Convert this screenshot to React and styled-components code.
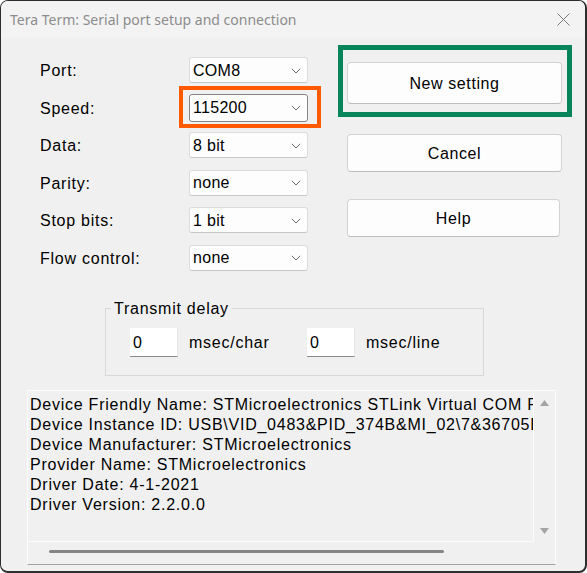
import React from 'react'
import styled, { createGlobalStyle } from 'styled-components'

const GlobalStyle = createGlobalStyle`
html, body {
  margin: 0;
  padding: 0;
  background: #ffffff;
}
`

const Window = styled.div`
width: 587px;
height: 573px;
box-sizing: border-box;
border: 1px solid #2e2e2e;
border-right-width: 2px;
border-bottom-width: 2px;
border-radius: 8px;
background: #f0f0f0;
overflow: hidden;
display: flex;
flex-direction: column;
font-family: "Liberation Sans", Arial, sans-serif;
font-size: 16px;
letter-spacing: 0.75px;
color: #000;
`

const TitleBar = styled.div`
height: 37px;
flex: none;
display: flex;
align-items: center;
justify-content: space-between;
padding-left: 9px;
background: #f3f3f3;
font-family: "Noto Sans", sans-serif;
font-size: 14px;
letter-spacing: 0;
color: #8c8c8c;
`

const CloseButton = styled.div`
width: 44px;
height: 37px;
display: flex;
align-items: center;
justify-content: center;
`

const Body = styled.div`
flex: 1;
display: flex;
flex-direction: column;
padding: 19px 31px 0 26px;
`

const TopRow = styled.div`
display: flex;
gap: 39px;
padding-left: 13px;
`

const FormGrid = styled.div`
display: grid;
grid-template-columns: 149px 119px;
grid-auto-rows: 26px;
row-gap: 11.5px;
align-items: center;
`

const Label = styled.div`
line-height: 20px;
padding-top: 2px;
`

const Combo = styled.div`
box-sizing: border-box;
height: ${p => p.focused ? '28px' : '26px'};
margin: ${p => p.focused ? '-1px 0' : '0'};
display: flex;
align-items: center;
justify-content: space-between;
padding: 1px 6px 0 3px;
background: #fdfdfd;
border: 1px solid ${p => p.focused ? '#858585' : '#dcdcdc'};
border-bottom-color: ${p => p.focused ? '#858585' : '#c8c8c8'};
border-radius: 3px;
letter-spacing: 0.3px;
`

const Marked = styled.div`
position: relative;
&::after {
  content: "";
  position: absolute;
  top: ${p => p.t}px;
  left: ${p => p.l}px;
  right: ${p => p.r}px;
  bottom: ${p => p.b}px;
  border: ${p => p.w}px solid ${p => p.color};
  pointer-events: none;
}
`

const ButtonCol = styled.div`
display: flex;
flex-direction: column;
padding-top: 5px;
`

const Button = styled.button`
box-sizing: border-box;
width: ${p => p.w || 215}px;
height: ${p => p.h || 38}px;
margin-top: ${p => p.mt || 0}px;
background: #fdfdfd;
border: 1px solid #d3d3d3;
border-bottom-color: #bdbdbd;
border-radius: 4px;
font-family: inherit;
font-size: 16px;
letter-spacing: 0.6px;
color: #000;
padding: 1px 0 0;
`

const GroupBox = styled.fieldset`
box-sizing: border-box;
width: 379px;
margin: 28px 0 0 78px;
padding: 9px 0 18px 0;
border: 1px solid #d8d8d8;
min-width: 0;
`

const Legend = styled.legend`
padding: 0 3px;
margin-left: 5px;
line-height: 20px;
`

const DelayRow = styled.div`
display: grid;
grid-template-columns: 48px 107px 48px auto;
column-gap: 11px;
align-items: center;
padding-left: 24px;
`

const DelayText = styled.span`
padding-top: 2px;
`

const DelayInput = styled.div`
box-sizing: border-box;
height: 29px;
padding: 5px 0 0 3px;
background: #ffffff;
border-bottom: 1px solid #8a8a8a;
border-right: 1px solid #e6e6e6;
line-height: 20px;
`

const InfoBox = styled.div`
box-sizing: border-box;
width: 529px;
height: 175px;
margin-top: 14px;
display: grid;
grid-template-columns: 1fr 21px;
grid-template-rows: 1fr 22px;
border: 1px solid #fbfbfb;
border-bottom-color: #a3a3a3;
`

const InfoText = styled.div`
overflow: hidden;
white-space: nowrap;
padding: 4px 0 0 2px;
border-right: 1px solid #fbfbfb;
border-bottom: 1px solid #fbfbfb;
line-height: 20px;
`

const VScroll = styled.div`
display: flex;
flex-direction: column;
justify-content: space-between;
align-items: center;
padding: 9px 0 8px;
`

const HScroll = styled.div`
grid-column: 1 / span 2;
padding: 8px 0 0 21px;
`

const Thumb = styled.div`
width: 395px;
height: 3px;
border-radius: 2px;
background: #858585;
`

const Chevron = () => (
  <svg width="10" height="6" viewBox="0 0 10 6">
    <path d="M0.8 0.8 L5 5 L9.2 0.8" fill="none" stroke="#6b6b6b" strokeWidth="1" />
  </svg>
)

const Arrow = ({ up }) => (
  <svg width="9" height="6" viewBox="0 0 9 6">
    <path d={up ? 'M0 6 L4.5 0 L9 6 Z' : 'M0 0 L4.5 6 L9 0 Z'} fill="#a3a3a3" />
  </svg>
)

const fields = [
  { label: 'Port:', value: 'COM8' },
  { label: 'Speed:', value: '115200', focused: true },
  { label: 'Data:', value: '8 bit' },
  { label: 'Parity:', value: 'none' },
  { label: 'Stop bits:', value: '1 bit' },
  { label: 'Flow control:', value: 'none' },
]

const info = [
  'Device Friendly Name: STMicroelectronics STLink Virtual COM Port (COM8)',
  'Device Instance ID: USB\\VID_0483&PID_374B&MI_02\\7&36705E40&0&0002',
  'Device Manufacturer: STMicroelectronics',
  'Provider Name: STMicroelectronics',
  'Driver Date: 4-1-2021',
  'Driver Version: 2.2.0.0',
]

const App = () => {
  return (
    <>
      <GlobalStyle />
      <Window>
        <TitleBar>
          <span>Tera Term: Serial port setup and connection</span>
          <CloseButton>
            <svg width="13" height="13" viewBox="0 0 13 13">
              <path d="M0.5 0.5 L12.5 12.5 M12.5 0.5 L0.5 12.5" stroke="#7a7a7a" strokeWidth="1" />
            </svg>
          </CloseButton>
        </TitleBar>
        <Body>
          <TopRow>
            <FormGrid>
              {fields.map(f => (
                <React.Fragment key={f.label}>
                  <Label>{f.label}</Label>
                  {f.focused ? (
                    <Marked t={-9} l={-10} r={-13} b={-7} w={4} color="#ff5a00">
                      <Combo focused>{f.value}<Chevron /></Combo>
                    </Marked>
                  ) : (
                    <Combo>{f.value}<Chevron /></Combo>
                  )}
                </React.Fragment>
              ))}
            </FormGrid>
            <ButtonCol>
              <Marked t={-17} l={-9} r={-10} b={-13} w={5} color="#08845a">
                <Button h={42}>New setting</Button>
              </Marked>
              <Button h={38} mt={30}>Cancel</Button>
              <Button h={38} w={213} mt={27}>Help</Button>
            </ButtonCol>
          </TopRow>
          <GroupBox>
            <Legend>Transmit delay</Legend>
            <DelayRow>
              <DelayInput>0</DelayInput>
              <DelayText>msec/char</DelayText>
              <DelayInput>0</DelayInput>
              <DelayText>msec/line</DelayText>
            </DelayRow>
          </GroupBox>
          <InfoBox>
            <InfoText>
              {info.map(line => <div key={line}>{line}</div>)}
            </InfoText>
            <VScroll>
              <Arrow up />
              <Arrow />
            </VScroll>
            <HScroll>
              <Thumb />
            </HScroll>
          </InfoBox>
        </Body>
      </Window>
    </>
  )
}

export default App
